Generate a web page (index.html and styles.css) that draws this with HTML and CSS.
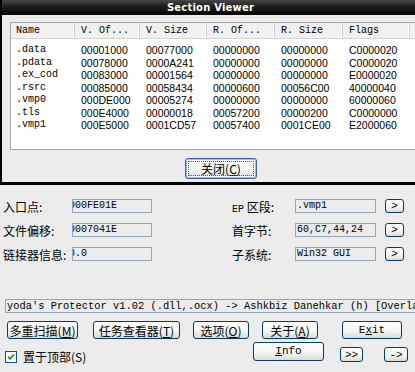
FILE: index.html
```html
<!doctype html>
<html>
<head>
  <title>PEiD - Section Viewer</title>
  <link rel="stylesheet" href="styles.css">
</head>
<body>
  <div class="viewer">
    <div class="titlebar">Section Viewer</div>
    <div class="viewer-body">
      <div class="list">
        <div class="row head">
          <div class="cell name">Name</div>
          <div class="cell">V. Of...</div>
          <div class="cell">V. Size</div>
          <div class="cell">R. Of...</div>
          <div class="cell">R. Size</div>
          <div class="cell">Flags</div>
          <div class="cell"></div>
        </div>
        <div class="rows">
          <div class="row"><div class="cell name">.data</div><div class="cell">00001000</div><div class="cell">00077000</div><div class="cell">00000000</div><div class="cell">00000000</div><div class="cell">C0000020</div></div>
          <div class="row"><div class="cell name">.pdata</div><div class="cell">00078000</div><div class="cell">0000A241</div><div class="cell">00000000</div><div class="cell">00000000</div><div class="cell">C0000020</div></div>
          <div class="row"><div class="cell name">.ex_cod</div><div class="cell">00083000</div><div class="cell">00001564</div><div class="cell">00000000</div><div class="cell">00000000</div><div class="cell">E0000020</div></div>
          <div class="row"><div class="cell name">.rsrc</div><div class="cell">00085000</div><div class="cell">00058434</div><div class="cell">00000600</div><div class="cell">00056C00</div><div class="cell">40000040</div></div>
          <div class="row"><div class="cell name">.vmp0</div><div class="cell">000DE000</div><div class="cell">00005274</div><div class="cell">00000000</div><div class="cell">00000000</div><div class="cell">60000060</div></div>
          <div class="row"><div class="cell name">.tls</div><div class="cell">000E4000</div><div class="cell">00000018</div><div class="cell">00057200</div><div class="cell">00000200</div><div class="cell">C0000000</div></div>
          <div class="row"><div class="cell name">.vmp1</div><div class="cell">000E5000</div><div class="cell">0001CD57</div><div class="cell">00057400</div><div class="cell">0001CE00</div><div class="cell">E2000060</div></div>
        </div>
      </div>
      <div class="viewer-foot">
        <button class="btn btn-close">关闭(<u>C</u>)</button>
      </div>
    </div>
  </div>

  <div class="main">
    <div class="fields">
      <div class="field-row">
        <div class="field-left">
          <span class="label">入口点:</span>
          <span class="box"><span class="clip">000FE01E</span></span>
        </div>
        <div class="field-right">
          <span class="label"><span class="mono">EP</span> 区段:</span>
          <span class="box box-wide">.vmp1</span>
          <button class="btn btn-arrow">&gt;</button>
        </div>
      </div>
      <div class="field-row">
        <div class="field-left">
          <span class="label">文件偏移:</span>
          <span class="box"><span class="clip">0007041E</span></span>
        </div>
        <div class="field-right">
          <span class="label">首字节:</span>
          <span class="box box-wide">60,C7,44,24</span>
          <button class="btn btn-arrow">&gt;</button>
        </div>
      </div>
      <div class="field-row">
        <div class="field-left">
          <span class="label">链接器信息:</span>
          <span class="box"><span class="clip">0.0</span></span>
        </div>
        <div class="field-right">
          <span class="label">子系统:</span>
          <span class="box box-wide">Win32 GUI</span>
          <button class="btn btn-arrow">&gt;</button>
        </div>
      </div>
    </div>

    <div class="sig">yoda's Protector v1.02 (.dll,.ocx) -&gt; Ashkbiz Danehkar (h) [Overlay]</div>

    <div class="btn-row">
      <button class="btn b-multi">多重扫描(<u>M</u>)</button>
      <button class="btn b-task">任务查看器(<u>T</u>)</button>
      <button class="btn b-opt">选项(<u>O</u>)</button>
      <button class="btn b-about">关于(<u>A</u>)</button>
      <button class="btn b-exit">E<u>x</u>it</button>
    </div>

    <div class="btn-row second">
      <label class="check">
        <svg class="checkbox" width="12" height="12" viewBox="0 0 12 12">
          <rect x="0.5" y="0.5" width="11" height="11" fill="#fff" stroke="#1c5180"/>
          <path d="M3 5.5 L5 7.8 L9 3.3" fill="none" stroke="#21a121" stroke-width="1.8"/>
        </svg>
        <span>置于顶部(S)</span>
      </label>
      <button class="btn b-info"><u>I</u>nfo</button>
      <button class="btn b-more">&gt;&gt;</button>
      <button class="btn b-go">-&gt;</button>
    </div>
  </div>
</body>
</html>
```

FILE: styles.css
```css
body {
  margin: 0;
  width: 415px;
  height: 372px;
  overflow: hidden;
  background: #ececec;
  font-family: "Noto Sans CJK SC", sans-serif;
  font-size: 12px;
  color: #000;
}

/* Section viewer window */
.viewer {
  height: 185px;
  border-left: 2px solid #000;
  border-bottom: 3px solid #000;
  box-sizing: border-box;
  display: flex;
  flex-direction: column;
}

.titlebar {
  height: 15px;
  line-height: 15px;
  background: linear-gradient(#474747, #1c1c1c 45%, #050505);
  color: #fff;
  font-family: "DejaVu Sans", sans-serif;
  font-weight: bold;
  font-size: 10px;
  letter-spacing: 0.2px;
  text-align: center;
  padding-left: 4px;
}

.viewer-body {
  flex: 1;
  background: #ececec;
  padding: 7px 0 0 8px;
}

.list {
  height: 128px;
  box-sizing: border-box;
  border: 1px solid #a5a5a5;
  border-right: 0;
  background: #fff;
  overflow: hidden;
}

.row {
  display: grid;
  grid-template-columns: 64px 65px 67px 68px 68px 67px 1fr;
  height: 12.5px;
  line-height: 12.5px;
}

.row.head {
  height: 15px;
  line-height: 15px;
  background: #f1f1f1;
  border-bottom: 1px solid #d4d4d4;
  font-family: "Liberation Mono", monospace;
  font-size: 10px;
}

.row.head .cell {
  border-right: 1px solid #cfcfcf;
  box-shadow: inset -1px 0 0 #fff;
}

.rows {
  padding-top: 5px;
  font-family: "Liberation Sans", sans-serif;
  font-size: 10.5px;
}

.cell {
  padding-left: 6px;
  white-space: nowrap;
  overflow: hidden;
}

.cell.name {
  padding-left: 5px;
  font-family: "Liberation Mono", monospace;
  font-size: 10px;
}

.viewer-foot {
  display: flex;
  padding: 8px 0 0 175px;
}

/* buttons */
.btn {
  box-sizing: border-box;
  height: 18px;
  padding: 0;
  border: 1px solid #003c74;
  border-radius: 3px;
  background: linear-gradient(#ffffff, #f3f3ef 60%, #dcd9d0);
  font-family: "Noto Sans CJK SC", sans-serif;
  font-size: 12px;
  line-height: 15px;
  color: #000;
}

.btn u {
  text-decoration: underline;
  text-underline-offset: 1px;
}

.btn-close {
  width: 72px;
  height: 21px;
  border-color: #3a62a8;
  box-shadow: inset 0 0 0 1px #9fbbe8, inset 0 0 0 2px #fff;
  outline: 1px dotted #555;
  outline-offset: -4px;
}

.btn-arrow {
  width: 19px;
  height: 14px;
  font-family: "Liberation Mono", monospace;
  font-size: 11px;
  line-height: 11px;
}

/* main window */
.main {
  padding-top: 14px;
}

.fields {
  display: flex;
  flex-direction: column;
  gap: 10px;
}

.field-row {
  display: flex;
  align-items: center;
  height: 14px;
}

.field-left {
  display: flex;
  align-items: center;
  padding-left: 3px;
}

.field-left .label {
  width: 69px;
}

.field-right {
  display: flex;
  align-items: center;
  margin-left: 80px;
}

.field-right .label {
  width: 63px;
}

.mono {
  font-family: "Liberation Mono", monospace;
  font-size: 10px;
}

.box {
  box-sizing: border-box;
  width: 80px;
  height: 14px;
  border: 1px solid #8ea6c2;
  background: #ececec;
  font-family: "Liberation Mono", monospace;
  font-size: 10px;
  line-height: 12px;
  padding-left: 1px;
  overflow: hidden;
  white-space: nowrap;
}

.box .clip {
  display: inline-block;
  margin-left: -5px;
}

.box-wide {
  width: 81px;
  margin-right: 9px;
}

.sig {
  box-sizing: border-box;
  margin: 38px 0 0 5px;
  height: 14px;
  width: 420px;
  border: 1px solid #8ea6c2;
  background: #ececec;
  font-family: "Liberation Mono", monospace;
  font-size: 10.4px;
  line-height: 12px;
  padding-left: 1px;
  white-space: nowrap;
  overflow: hidden;
}

.btn-row {
  display: flex;
  margin-top: 8px;
  height: 18px;
}

.b-multi { width: 71px; margin-left: 7px; }
.b-task { width: 87px; margin-left: 15px; }
.b-opt { width: 56px; margin-left: 13px; }
.b-about { width: 56px; margin-left: 13px; }
.b-exit {
  width: 60px;
  margin-left: 24px;
  font-family: "Liberation Mono", monospace;
  font-size: 11px;
}

.btn-row.second {
  margin-top: 3px;
  height: 20px;
  align-items: flex-start;
}

.check {
  display: flex;
  align-items: center;
  gap: 6px;
  margin: 9px 0 0 5px;
  width: 166px;
  font-size: 12px;
  line-height: 12px;
}

.b-info {
  width: 71px;
  height: 19px;
  margin-left: 82px;
  font-family: "Liberation Mono", monospace;
  font-size: 11px;
}

.b-more {
  width: 23px;
  height: 15px;
  margin: 5px 0 0 16px;
  font-family: "Liberation Mono", monospace;
  font-size: 11px;
  line-height: 12px;
}

.b-go {
  width: 24px;
  height: 15px;
  margin: 5px 0 0 21px;
  font-family: "Liberation Mono", monospace;
  font-size: 11px;
  line-height: 12px;
}
```
